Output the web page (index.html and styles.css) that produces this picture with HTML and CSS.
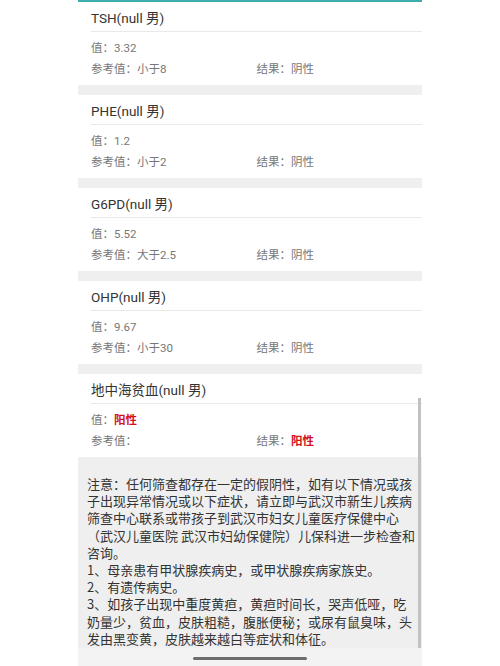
FILE: index.html
```html
<!DOCTYPE html>
<html lang="zh-CN">
<head>
<meta charset="utf-8">
<title>筛查结果</title>
<link rel="stylesheet" href="styles.css">
</head>
<body>
<div class="screen">
  <div class="topbar"></div>

  <section class="card">
    <div class="card-title">TSH(null 男)</div>
    <div class="card-body">
      <div class="row">值：3.32</div>
      <div class="row cols"><span>参考值：小于8</span><span>结果：阴性</span></div>
    </div>
  </section>

  <section class="card">
    <div class="card-title">PHE(null 男)</div>
    <div class="card-body">
      <div class="row">值：1.2</div>
      <div class="row cols"><span>参考值：小于2</span><span>结果：阴性</span></div>
    </div>
  </section>

  <section class="card">
    <div class="card-title">G6PD(null 男)</div>
    <div class="card-body">
      <div class="row">值：5.52</div>
      <div class="row cols"><span>参考值：大于2.5</span><span>结果：阴性</span></div>
    </div>
  </section>

  <section class="card">
    <div class="card-title">OHP(null 男)</div>
    <div class="card-body">
      <div class="row">值：9.67</div>
      <div class="row cols"><span>参考值：小于30</span><span>结果：阴性</span></div>
    </div>
  </section>

  <section class="card">
    <div class="card-title">地中海贫血(null 男)</div>
    <div class="card-body">
      <div class="row">值：<span class="pos">阳性</span></div>
      <div class="row cols"><span>参考值：</span><span>结果：<span class="pos">阳性</span></span></div>
    </div>
  </section>

  <div class="note">
    <p>注意：任何筛查都存在一定的假阴性，如有以下情况或孩<br>子出现异常情况或以下症状，请立即与武汉市新生儿疾病<br>筛查中心联系或带孩子到武汉市妇女儿童医疗保健中心<br>（武汉儿童医院 武汉市妇幼保健院）儿保科进一步检查和<br>咨询。</p>
    <p>1、母亲患有甲状腺疾病史，或甲状腺疾病家族史。</p>
    <p>2、有遗传病史。</p>
    <p>3、如孩子出现中重度黄疸，黄疸时间长，哭声低哑，吃<br>奶量少，贫血，皮肤粗糙，腹胀便秘；或尿有鼠臭味，头<br>发由黑变黄，皮肤越来越白等症状和体征。</p>
  </div>

  <div class="navbar"><div class="home"></div></div>

  <div class="scrollbar"></div>
</div>
</body>
</html>
```

FILE: styles.css
```css
html, body {
  margin: 0;
  padding: 0;
  background: #ffffff;
  overflow: hidden;
  height: 666px;
}

body {
  font-family: Roboto, "Noto Sans CJK SC", sans-serif;
}

.screen {
  position: relative;
  width: 344px;
  margin: 0 auto;
  background: #efefef;
  height: 666px;
  overflow: hidden;
}

.topbar {
  height: 2px;
  background: #3eaeaa;
}

.card {
  background: #ffffff;
  margin-bottom: 10px;
}

.card:last-of-type {
  margin-bottom: 0;
}

.card-title {
  margin-left: 13px;
  padding: 6px 0 3px;
  line-height: 20px;
  font-size: 13.5px;
  color: #333333;
  border-bottom: 1px solid #e9e9e9;
}

.card-body {
  padding: 6px 0 5px 13px;
  font-size: 11.5px;
  color: #777777;
}

.row {
  line-height: 21px;
}

.cols {
  display: grid;
  grid-template-columns: 1fr 1fr;
}

.pos {
  color: #d3111c;
  font-weight: 700;
}

.note {
  padding: 18px 0 0 9px;
  font-family: "Noto Sans CJK SC", sans-serif;
  font-size: 13px;
  line-height: 17.2px;
  color: #333333;
  white-space: nowrap;
}

.note p {
  margin: 0;
}

.navbar {
  height: 20px;
  margin-top: 1px;
  background: #f3f3f3;
  display: flex;
  justify-content: center;
  padding-top: 9px;
}

.home {
  width: 114px;
  height: 3px;
  border-radius: 2px;
  background: #6d6d6d;
}

.scrollbar {
  position: absolute;
  right: 1px;
  top: 398px;
  width: 3px;
  height: 250px;
  background: #c2c2c2;
}
```
